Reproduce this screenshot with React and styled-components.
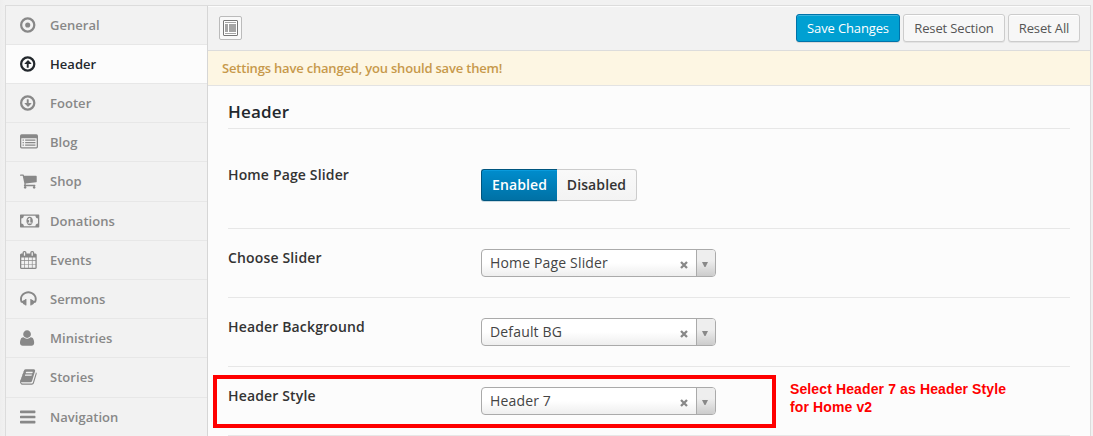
import React from "react";
import styled, { createGlobalStyle, css } from "styled-components";

const Global = createGlobalStyle`
  * { box-sizing: border-box; }
  html, body { margin: 0; padding: 0; height: 436px; overflow: hidden; }
  body { background: #f1f1f1; font-family: "Open Sans", "Noto Sans", sans-serif; font-size: 13px; color: #444; }
`;

const Page = styled.div`
  position: relative;
  width: 1093px;
  height: 436px;
  padding: 5px 2px 0 5px;
  overflow: hidden;
  background: linear-gradient(to right, #eeeeee 0, #f1f1f1 5px);
`;

const Panel = styled.div`
  display: flex;
  height: 460px;
  border: 1px solid #dcdcdc;
  border-bottom: 0;
  background: #fcfcfc;
`;

const Sidebar = styled.nav`
  flex: 0 0 202px;
  border-right: 1px solid #d6d6d6;
  background: #f2f2f2;
`;

const Item = styled.a`
  display: flex;
  align-items: center;
  height: 39.21px;
  padding: 0 0 0.2px 14px;
  border-bottom: 1px solid #e7e7e7;
  font-weight: 600;
  line-height: 18px;
  letter-spacing: 0.04px;
  color: ${(p) => (p.$active ? "#23282d" : "#888")};
  background: ${(p) => (p.$active ? "#fcfcfc" : "transparent")};
  &:first-child { height: 38.8px; }
`;

const Glyph = styled.svg`
  flex: 0 0 30px;
  height: 18px;
  fill: currentColor;
`;

const Main = styled.main`
  flex: 1;
  min-width: 0;
`;

const Toolbar = styled.header`
  display: flex;
  align-items: flex-start;
  height: 45px;
  padding: 8px 10px 0 11px;
  background: #f2f2f2;
  border-top: 1px solid #fcfcfc;
  border-bottom: 1px solid #dcdcdc;
`;

const Expand = styled.button`
  display: flex;
  align-items: center;
  justify-content: center;
  width: 23px;
  height: 24px;
  margin: 1px auto 0 0;
  padding: 0;
  border: 1px solid #bbb;
  border-radius: 2px;
  background: #f9f9f9;
`;

const Button = styled.button`
  width: ${(p) => p.$width}px;
  height: 28px;
  margin: -1px 0 0 3px;
  padding: 1px 0 0;
  font: 400 13px/25px "Open Sans", sans-serif;
  letter-spacing: -0.14px;
  white-space: nowrap;
  border: 1px solid #ccc;
  border-radius: 3px;
  color: #555;
  background: #f7f7f7;
  box-shadow: inset 0 1px 0 #fff, 0 1px 0 rgba(0, 0, 0, 0.06);
  ${(p) => p.$primary && css`
    color: #fff;
    border-color: #0073aa;
    background: #00a0d2;
    box-shadow: inset 0 1px 0 rgba(120, 200, 230, 0.5), 0 1px 0 rgba(0, 0, 0, 0.1);
  `}
`;

const Notice = styled.div`
  height: 35px;
  padding: 0 14px;
  border-bottom: 1px solid #e3e3e3;
  background: #fdf6e3;
  color: #c7994b;
  font-weight: 600;
  line-height: 35px;
  letter-spacing: -0.19px;
`;

const Content = styled.section`
  padding: 0 20px;
`;

const Title = styled.h2`
  height: 43px;
  margin: 0;
  padding-top: 14px;
  border-bottom: 1px solid #e7e7e7;
  font-size: 17px;
  font-weight: 600;
  line-height: 24px;
  letter-spacing: 0.2px;
  color: #23282d;
`;

const Field = styled.div`
  display: flex;
  height: ${(p) => (p.$tall ? 100 : 69)}px;
  padding-top: ${(p) => (p.$tall ? 37 : 20)}px;
  border-bottom: 1px solid #e7e7e7;
`;

const Label = styled.div`
  flex: 0 0 253px;
  font-size: 14px;
  font-weight: 600;
  line-height: 18px;
  letter-spacing: 0.15px;
  color: #333;
`;

const Toggle = styled.div`
  display: flex;
  height: 32px;
  margin-top: 3px;
`;

const Option = styled.button`
  width: 80px;
  padding: 0;
  font: 600 14px/30px "Open Sans", sans-serif;
  letter-spacing: 0.1px;
  color: #333;
  border: 1px solid #ccc;
  border-left-width: 0;
  border-radius: 0 3px 3px 0;
  background: linear-gradient(#f9f9f9, #f3f3f3);
  ${(p) => p.$on && css`
    width: 76px;
    color: #fff;
    border: 1px solid #00557f;
    border-right-width: 0;
    border-radius: 3px 0 0 3px;
    background: linear-gradient(#008dcd, #0071a5);
    box-shadow: inset 0 1px 0 #0a9bdc, 0 1px 0 rgba(0, 85, 127, 0.2);
  `}
`;

const Select = styled.div`
  display: flex;
  width: 235px;
  height: 28px;
  border: 1px solid #aaa;
  border-radius: 4px;
  overflow: hidden;
  background: linear-gradient(#fff 50%, #eee);
`;

const Value = styled.span`
  flex: 1;
  padding-left: 8px;
  font-size: 14px;
  line-height: 26px;
  letter-spacing: 0.16px;
  color: #444;
`;

const Clear = styled.svg`
  width: 8px;
  height: 8px;
  margin: 11px 8px 0 0;
`;

const Arrow = styled.span`
  display: flex;
  width: 19px;
  padding: 12px 0 0 5px;
  border-left: 1px solid #aaa;
  background: linear-gradient(#eee 40%, #ccc);
`;

const Highlight = styled.div`
  position: absolute;
  left: 213px;
  top: 375px;
  width: 563px;
  height: 53px;
  border: 4px solid #f00;
  pointer-events: none;
`;

const Annotation = styled.div`
  position: absolute;
  left: 790px;
  top: 380px;
  font: bold 14px/18px "Liberation Sans", Arial, sans-serif;
  letter-spacing: 0.12px;
  color: #f00;
`;

const RING = "M896 352a544 544 0 1 0 0 1088a544 544 0 1 0 0-1088zM896 128a768 768 0 1 1 0 1536a768 768 0 1 1 0-1536z";

const icons = {
  dot: [128, RING + "M896 640a256 256 0 1 1 0 512a256 256 0 1 1 0-512z"],
  up: [128, RING + "M1216 864q0 32-32 32h-192v352q0 32-32 32h-128q-32 0-32-32v-352h-192q-32 0-32-32q0-12 10-24l319-319q10-9 23-9t23 9l320 320q9 10 9 23z"],
  down: [128, RING + "M1216 928q0-32-32-32h-192v-352q0-32-32-32h-128q-32 0-32 32v352h-192q-32 0-32 32q0 12 10 24l319 319q10 9 23 9t23-9l320-320q9-10 9-23z"],
  list: [0, "M160 128h1472a160 160 0 0 1 160 160v1088a160 160 0 0 1-160 160h-1472a160 160 0 0 1-160-160v-1088a160 160 0 0 1 160-160zM160 512a32 32 0 0 0-32 32v832a32 32 0 0 0 32 32h1472a32 32 0 0 0 32-32v-832a32 32 0 0 0-32-32zM256 640h128v128h-128zM512 640h1024v128h-1024zM256 896h128v128h-128zM512 896h1024v128h-1024zM256 1152h128v128h-128zM512 1152h1024v128h-1024z"],
  cart: [64, "M704 1536q0 52-38 90t-90 38-90-38-38-90 38-90 90-38 90 38 38 90zm896 0q0 52-38 90t-90 38-90-38-38-90 38-90 90-38 90 38 38 90zm128-1088v512q0 24-16.5 42.5t-40.5 21.5l-1044 122q13 60 13 70 0 16-24 64h920q26 0 45 19t19 45-19 45-45 19h-1024q-26 0-45-19t-19-45q0-11 8-31.5t16-36 21.5-40 15.5-29.5l-177-823h-204q-26 0-45-19t-19-45 19-45 45-19h256q16 0 28.5 6.5t19.5 15.5 13 24.5 8 26 5.5 29.5 4.5 26h1201q26 0 45 19t19 45z"],
  money: [0, "M64 256h1792a64 64 0 0 1 64 64v1152a64 64 0 0 1-64 64h-1792a64 64 0 0 1-64-64v-1152a64 64 0 0 1 64-64zM384 384q0 106-75 181t-181 75v512q106 0 181 75t75 181h1152q0-106 75-181t181-75v-512q-106 0-181-75t-75-181zM960 480q150 0 235 128t85 288t-85 288t-235 128t-235-128t-85-288t85-288t235-128zM768 1152h384v-96h-128v-448h-114l-148 137 77 80 69-66v297h-140z"],
  calendar: [64, "M192 256h128v-96q0-66 47-113t113-47h64q66 0 113 47t47 113v96h384v-96q0-66 47-113t113-47h64q66 0 113 47t47 113v96h128q52 0 90 38t38 90v1280q0 52-38 90t-90 38h-1408q-52 0-90-38t-38-90v-1280q0-52 38-90t90-38zM192 640v288h288v-288zM544 640v288h320v-288zM928 640v288h320v-288zM1312 640v288h288v-288zM192 992v320h288v-320zM544 992v320h320v-320zM928 992v320h320v-320zM1312 992v320h288v-320zM192 1376v288h288v-288zM544 1376v288h320v-288zM928 1376v288h320v-288zM1312 1376v288h288v-288zM480 128q-32 0-32 32v288q0 32 32 32h64q32 0 32-32v-288q0-32-32-32zM1248 128q-32 0-32 32v288q0 32 32 32h64q32 0 32-32v-288q0-32-32-32z"],
  headphones: [64, "M1728 886q0 166-60 314l-20 49-185 33q-22 83-90.5 136.5t-156.5 53.5v32q0 14-9 23t-23 9h-64q-14 0-23-9t-9-23v-576q0-14 9-23t23-9h64q14 0 23 9t9 23v32q71 0 130 35.5t93 95.5l68-12q29-95 29-193 0-148-88-279t-236.5-209-315.5-78-315.5 78-236.5 209-88 279q0 98 29 193l68 12q34-60 93-95.5t130-35.5v-32q0-14 9-23t23-9h64q14 0 23 9t9 23v576q0 14-9 23t-23 9h-64q-14 0-23-9t-9-23v-32q-88 0-156.5-53.5t-90.5-136.5l-185-33-20-49q-60-148-60-314 0-151 67-291t179-242.5 266-163.5 320-61 320 61 266 163.5 179 242.5 67 291z"],
  user: [192, "M1600 1405q0 120-73 189.5t-194 69.5h-874q-121 0-194-69.5t-73-189.5q0-53 3.5-103.5t14-109 26.5-108.5 43-97.5 62-81 85.5-53.5 111.5-20q9 0 42 21.5t74.5 48 108 48 133.5 21.5 133.5-21.5 108-48 74.5-48 42-21.5q61 0 111.5 20t85.5 53.5 62 81 43 97.5 26.5 108.5 14 109 3.5 103.5zM1280 512q0 159-112.5 271.500t-271.500 112.500-271.500-112.500-112.500-271.500 112.500-271.500 271.500-112.500 271.500 112.500 112.500 271.500z"],
  book: [64, "M1703 478q40 57 18 129l-275 906q-19 64-76.5 107.5t-122.5 43.5h-923q-77 0-148.5-53.5t-99.5-131.5q-24-67-2-127 0-4 3-27t4-37q1-8-3-21.5t-3-19.5q2-11 8-21t16.5-23.5 16.5-23.5q23-38 45-91.5t30-91.5q3-10 .5-30t-.5-28q3-11 17-28t17-23q21-36 42-92t25-90q1-9-2.5-32t.5-28q4-13 22-30.5t22-22.5q19-26 42.5-84.5t27.5-96.5q1-8-3-25.5t-2-26.5q2-8 9-18t18-23 17-21q8-12 16.5-30.5t15-35 16-36 19.5-32 26.5-23.5 36-11.5 47.5 5.5l-1 3q38-9 51-9h761q74 0 114 56t18 130l-274 906q-36 119-71.5 153.5t-128.5 34.5h-869q-27 0-38 15-11 16-1 43 24 70 144 70h923q29 0 56-15.5t35-41.5l300-987q7-22 5-57 38 15 59 43zm-1064 2q-4 13 2 22.5t20 9.5h608q13 0 25.5-9.5t16.5-22.5l21-64q4-13-2-22.5t-20-9.5h-608q-13 0-25.5 9.5t-16.5 22.5zm-83 256q-4 13 2 22.5t20 9.5h608q13 0 25.5-9.5t16.5-22.5l21-64q4-13-2-22.5t-20-9.5h-608q-13 0-25.5 9.5t-16.5 22.5z"],
  bars: [128, "M192 256h1408a64 64 0 0 1 64 64v128a64 64 0 0 1-64 64h-1408a64 64 0 0 1-64-64v-128a64 64 0 0 1 64-64zM192 768h1408a64 64 0 0 1 64 64v128a64 64 0 0 1-64 64h-1408a64 64 0 0 1-64-64v-128a64 64 0 0 1 64-64zM192 1280h1408a64 64 0 0 1 64 64v128a64 64 0 0 1-64 64h-1408a64 64 0 0 1-64-64v-128a64 64 0 0 1 64-64z"],
};

const menu = [
  ["General", "dot"], ["Header", "up"], ["Footer", "down"], ["Blog", "list"],
  ["Shop", "cart"], ["Donations", "money"], ["Events", "calendar"],
  ["Sermons", "headphones"], ["Ministries", "user"], ["Stories", "book"], ["Navigation", "bars"],
];

const selects = [
  ["Choose Slider", "Home Page Slider"],
  ["Header Background", "Default BG"],
  ["Header Style", "Header 7"],
];

function Icon({ name }) {
  const [x, d] = icons[name];
  return (
    <Glyph viewBox={`${x} 0 2987 1792`} preserveAspectRatio="xMinYMid meet">
      <path fillRule="evenodd" d={d} />
    </Glyph>
  );
}

export default function App() {
  return (
    <Page>
      <Global />
      <Panel>
        <Sidebar>
          {menu.map(([label, icon]) => (
            <Item key={label} $active={label === "Header"}>
              <Icon name={icon} />
              {label}
            </Item>
          ))}
        </Sidebar>
        <Main>
          <Toolbar>
            <Expand aria-label="Expand options">
              <svg width="15" height="16" viewBox="0 0 15 16">
                <rect x=".5" y=".5" width="14" height="15" rx=".5" fill="#fff" stroke="#777" />
                <path fill="#a5a5a5" d="M2 2h11v1H2zM2 4h3v8H2zM6 4h7v8H6zM2 13h11v1H2z" />
              </svg>
            </Expand>
            <Button $primary $width={104}>Save Changes</Button>
            <Button $width={102}>Reset Section</Button>
            <Button $width={72}>Reset All</Button>
          </Toolbar>
          <Notice>Settings have changed, you should save them!</Notice>
          <Content>
            <Title>Header</Title>
            <Field $tall>
              <Label>Home Page Slider</Label>
              <Toggle>
                <Option $on>Enabled</Option>
                <Option>Disabled</Option>
              </Toggle>
            </Field>
            {selects.map(([label, value]) => (
              <Field key={label}>
                <Label>{label}</Label>
                <Select>
                  <Value>{value}</Value>
                  <Clear viewBox="0 0 8 8">
                    <path d="M1 1l6 6M7 1l-6 6" stroke="#888" strokeWidth="2.3" />
                  </Clear>
                  <Arrow>
                    <svg width="6" height="5" viewBox="0 0 6 5">
                      <path d="M0 0h6L3.5 5h-1z" fill="#888" />
                    </svg>
                  </Arrow>
                </Select>
              </Field>
            ))}
          </Content>
        </Main>
      </Panel>
      <Highlight />
      <Annotation>
        Select Header 7 as Header Style
        <br />
        for Home v2
      </Annotation>
    </Page>
  );
}
